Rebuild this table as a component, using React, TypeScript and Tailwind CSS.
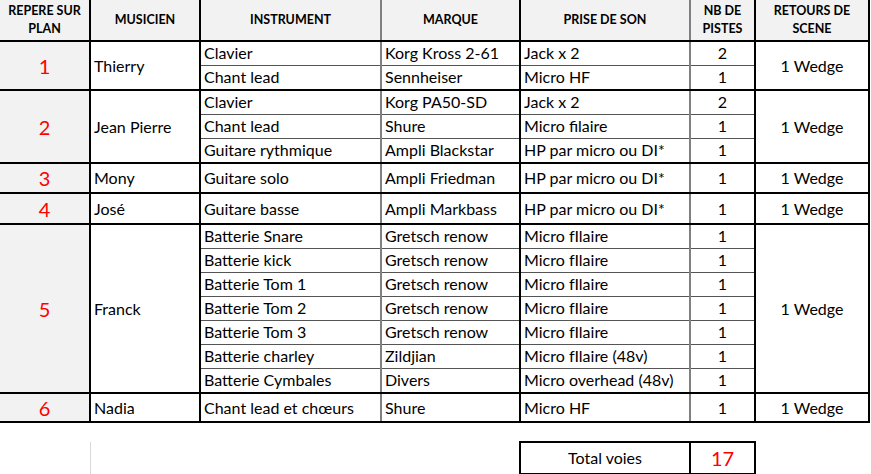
import React from 'react';

type Group = {
  n: string;
  name: string;
  rows: string[][];
  heights: number[];
};

const groups: Group[] = [
  {
    n: '1',
    name: 'Thierry',
    rows: [
      ['Clavier', 'Korg Kross 2-61', 'Jack x 2', '2'],
      ['Chant lead', 'Sennheiser', 'Micro HF', '1'],
    ],
    heights: [24, 25],
  },
  {
    n: '2',
    name: 'Jean Pierre',
    rows: [
      ['Clavier', 'Korg PA50-SD', 'Jack x 2', '2'],
      ['Chant lead', 'Shure', 'Micro filaire', '1'],
      ['Guitare rythmique', 'Ampli Blackstar', 'HP par micro ou DI*', '1'],
    ],
    heights: [24, 24, 25],
  },
  {
    n: '3',
    name: 'Mony',
    rows: [['Guitare solo', 'Ampli Friedman', 'HP par micro ou DI*', '1']],
    heights: [30],
  },
  {
    n: '4',
    name: 'José',
    rows: [['Guitare basse', 'Ampli Markbass', 'HP par micro ou DI*', '1']],
    heights: [31],
  },
  {
    n: '5',
    name: 'Franck',
    rows: [
      ['Batterie Snare', 'Gretsch renow', 'Micro fIlaire', '1'],
      ['Batterie kick', 'Gretsch renow', 'Micro fIlaire', '1'],
      ['Batterie Tom 1', 'Gretsch renow', 'Micro fIlaire', '1'],
      ['Batterie Tom 2', 'Gretsch renow', 'Micro fIlaire', '1'],
      ['Batterie Tom 3', 'Gretsch renow', 'Micro fIlaire', '1'],
      ['Batterie charley', 'Zildjian', 'Micro fIlaire (48v)', '1'],
      ['Batterie Cymbales', 'Divers', 'Micro overhead (48v)', '1'],
    ],
    heights: [24, 24, 24, 24, 24, 24, 25],
  },
  {
    n: '6',
    name: 'Nadia',
    rows: [['Chant lead et chœurs', 'Shure', 'Micro HF', '1']],
    heights: [29],
  },
];

function Cols() {
  return (
    <colgroup>
      <col className="w-[90px]" />
      <col className="w-[110px]" />
      <col className="w-[181px]" />
      <col className="w-[139px]" />
      <col className="w-[170px]" />
      <col className="w-[65px]" />
      <col className="w-[114px]" />
    </colgroup>
  );
}

export default function App() {
  const head = 'bg-[#f2f2f2] border-r-2 border-b-2 border-black text-center align-middle font-bold text-[12.5px] leading-[18px]';
  return (
    <div
      className="w-[871px] h-[474px] overflow-hidden bg-white text-black"
      style={{ fontFamily: 'Lato, "Liberation Sans", sans-serif' }}
    >
      <table className="table-fixed border-collapse w-[869px] text-[16px] leading-[20px]">
        <Cols />
        <thead>
          <tr className="h-[41px]">
            <th className={head}>
              REPERE SUR
              <br />
              PLAN
            </th>
            <th className={head}>MUSICIEN</th>
            <th className={`${head} border-r-[#808080]`}>INSTRUMENT</th>
            <th className={head}>MARQUE</th>
            <th className={`${head} border-r-[#808080]`}>PRISE DE SON</th>
            <th className={head}>
              NB DE
              <br />
              PISTES
            </th>
            <th className={head}>
              RETOURS DE
              <br />
              SCENE
            </th>
          </tr>
        </thead>
        <tbody>
          {groups.map((g) =>
            g.rows.map((r, i) => {
              const last = i === g.rows.length - 1;
              const rowB = last ? 'border-b-2 border-b-black' : 'border-b border-b-[#555555]';
              return (
                <tr key={g.n + i} style={{ height: g.heights[i] }}>
                  {i === 0 && (
                    <>
                      <td
                        rowSpan={g.rows.length}
                        className="bg-[#f2f2f2] border-r-2 border-b-2 border-black text-center align-middle text-[#ff0000] text-[20px]"
                      >
                        {g.n}
                      </td>
                      <td
                        rowSpan={g.rows.length}
                        className="border-r-2 border-b-2 border-black align-middle pl-[3px]"
                      >
                        {g.name}
                      </td>
                    </>
                  )}
                  <td className={`${rowB} border-r-2 border-r-[#808080] align-middle pl-[3px] whitespace-nowrap`}>
                    {r[0]}
                  </td>
                  <td className={`${rowB} border-r-2 border-r-black align-middle pl-[3px] whitespace-nowrap`}>
                    {r[1]}
                  </td>
                  <td className={`${rowB} border-r-2 border-r-[#808080] align-middle pl-[3px] whitespace-nowrap`}>
                    {r[2]}
                  </td>
                  <td className={`${rowB} border-r-2 border-r-black align-middle text-center`}>{r[3]}</td>
                  {i === 0 && (
                    <td
                      rowSpan={g.rows.length}
                      className="border-r-2 border-b-2 border-black align-middle text-center"
                    >
                      1 Wedge
                    </td>
                  )}
                </tr>
              );
            })
          )}
        </tbody>
      </table>

      <table className="table-fixed border-collapse w-[869px] text-[16px] mt-[18px]">
        <Cols />
        <tbody>
          <tr className="h-[30px]">
            <td className="border-r border-b border-[#d9d9d9]" />
            <td className="border-b border-[#d9d9d9]" />
            <td />
            <td />
            <td className="border-2 border-black text-center align-middle">Total voies</td>
            <td className="border-2 border-black text-center align-middle text-[#ff0000] text-[20px]">17</td>
            <td />
          </tr>
        </tbody>
      </table>
    </div>
  );
}
